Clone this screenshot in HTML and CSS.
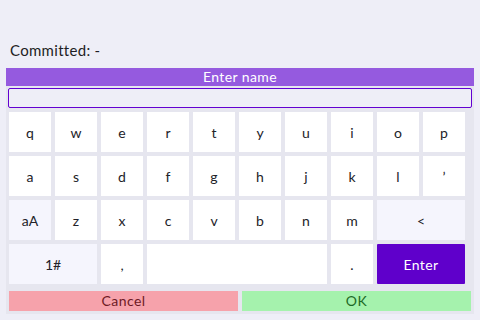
FILE: index.html
```html
<!DOCTYPE html>
<html>
<head>
<meta charset="utf-8">
<link rel="stylesheet" href="styles.css">
</head>
<body>
<div class="status">Committed: -</div>
<div class="panel">
  <div class="title">Enter name</div>
  <div class="input"></div>
  <div class="keys">
    <div class="key">q</div><div class="key">w</div><div class="key">e</div><div class="key">r</div><div class="key">t</div>
    <div class="key">y</div><div class="key">u</div><div class="key">i</div><div class="key">o</div><div class="key">p</div>
    <div class="key">a</div><div class="key">s</div><div class="key">d</div><div class="key">f</div><div class="key">g</div>
    <div class="key">h</div><div class="key">j</div><div class="key">k</div><div class="key">l</div><div class="key">’</div>
    <div class="key special">aA</div><div class="key">z</div><div class="key">x</div><div class="key">c</div><div class="key">v</div>
    <div class="key">b</div><div class="key">n</div><div class="key">m</div><div class="key special span2">&lt;</div>
    <div class="key special span2">1#</div><div class="key">,</div><div class="key span4"></div><div class="key">.</div><div class="key enter span2">Enter</div>
  </div>
  <div class="actions">
    <div class="btn cancel">Cancel</div>
    <div class="btn ok">OK</div>
  </div>
</div>
</body>
</html>
```
FILE: styles.css
```css
html, body {
  margin: 0;
  padding: 0;
  background: #eeeef7;
  font-family: "Lato", "Noto Sans", sans-serif;
  color: #1e1e24;
}
.status {
  box-sizing: border-box;
  height: 68px;
  padding: 40px 0 0 10px;
  line-height: 20px;
  font-size: 15px;
  letter-spacing: 0.3px;
}
.panel {
  margin-left: 6px;
  width: 468px;
  background: #e6e6ef;
  padding-bottom: 3px;
}
.title {
  height: 18px;
  line-height: 18px;
  background: #955adf;
  color: #ffffff;
  text-align: center;
  font-size: 14px;
  letter-spacing: 0.4px;
}
.input {
  margin: 2px 2px 0 2px;
  height: 20px;
  box-sizing: border-box;
  border: 1.5px solid #6300d1;
  border-radius: 2px;
  background: #eeeef7;
}
.keys {
  margin-top: 4px;
  padding-left: 3px;
  display: grid;
  grid-template-columns: repeat(10, 42px);
  grid-auto-rows: 40px;
  gap: 4px;
}
.key {
  background: #ffffff;
  display: flex;
  align-items: center;
  justify-content: center;
  font-size: 14px;
  color: #222228;
}
.key.special {
  background: #f5f5fd;
}
.span2 { grid-column: span 2; }
.span4 { grid-column: span 4; }
.key.enter {
  background: #5f00cb;
  color: #ffffff;
  font-size: 14px;
  letter-spacing: 0.4px;
  border-radius: 1px;
}
.actions {
  margin-top: 7px;
  padding: 0 3px;
  display: flex;
  gap: 4px;
}
.btn {
  flex: 1;
  height: 20px;
  line-height: 20px;
  text-align: center;
  font-size: 14px;
  letter-spacing: 0.4px;
}
.cancel {
  background: #f6a2ab;
  color: #6e1a25;
}
.ok {
  background: #a5f2ad;
  color: #1d6a27;
}
```
